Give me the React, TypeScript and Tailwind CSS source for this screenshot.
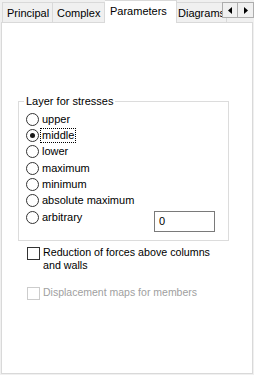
import React from "react";

const font = { fontFamily: '"Liberation Sans", Arial, sans-serif' };

function Radio({ label, checked, focus }: { label: string; checked?: boolean; focus?: boolean }) {
  return (
    <div className="flex items-center h-[16.33px]">
      <span className="w-[13px] h-[13px] rounded-full border border-[#333333] bg-white flex items-center justify-center shrink-0">
        {checked && <span className="w-[5px] h-[5px] rounded-full bg-[#1a1a1a]" />}
      </span>
      <span
        className={
          "ml-[2px] px-px leading-[13px] text-[11px] text-black " +
          (focus ? "outline outline-1 outline-dotted outline-black" : "")
        }
      >
        {label}
      </span>
    </div>
  );
}

export default function App() {
  return (
    <div className="w-[254px] h-[375px] bg-[#f0f0f0] overflow-hidden" style={font}>
      <div className="relative h-[22px] flex items-end pl-[2px]">
        <div className="h-[20px] w-[51px] border border-b-0 border-[#d9d9d9] bg-[#f0f0f0] text-[11px] text-black pl-[4px] pt-[4px] leading-[13px]">
          Principal
        </div>
        <div className="h-[20px] w-[52px] border border-b-0 border-l-0 border-[#d9d9d9] bg-[#f0f0f0] text-[11px] text-black pl-[4px] pt-[4px] leading-[13px]">
          Complex
        </div>
        <div className="relative z-10 -mb-px h-[23px] w-[72px] border border-b-0 border-l-0 border-[#d9d9d9] bg-white text-[11px] text-black pl-[5px] pt-[4px] leading-[13px]">
          Parameters
        </div>
        <div className="h-[20px] w-[50px] border border-b-0 border-l-0 border-[#d9d9d9] bg-[#f0f0f0] text-[11px] text-black pl-[1px] pt-[4px] leading-[13px] whitespace-nowrap overflow-hidden">
          Diagrams
        </div>
        <div className="absolute right-0 top-[2px] flex">
          <div className="w-[16px] h-[16px] border border-[#adadad] bg-[#f0f0f0] flex items-center justify-center">
            <svg width="4" height="7" viewBox="0 0 4 7"><path d="M4 0 L0 3.5 L4 7 Z" fill="#000" /></svg>
          </div>
          <div className="w-[16px] h-[16px] border border-l-0 border-[#adadad] bg-[#f0f0f0] flex items-center justify-center">
            <svg width="4" height="7" viewBox="0 0 4 7"><path d="M0 0 L4 3.5 L0 7 Z" fill="#000" /></svg>
          </div>
        </div>
      </div>
      <div className="ml-px w-[252px] h-[352px] border border-[#d9d9d9] bg-white">
        <div className="relative ml-[16px] mt-[78px] w-[211px] border border-[#dcdcdc] pl-[7px] pt-[9px] pb-[8px]">
          <div className="absolute left-[5px] top-[-8px] bg-white px-[2px] text-[11px] leading-[14px] text-black">
            Layer for stresses
          </div>
          <Radio label="upper" />
          <Radio label="middle" checked focus />
          <Radio label="lower" />
          <Radio label="maximum" />
          <Radio label="minimum" />
          <Radio label="absolute maximum" />
          <div className="flex items-start justify-between pr-[13px]">
            <Radio label="arbitrary" />
            <div className="mt-[2px] w-[61px] h-[21px] border border-[#7a7a7a] bg-white text-[11px] text-black pl-[4px] leading-[19px]">
              0
            </div>
          </div>
        </div>
        <div className="ml-[25px] mt-[5px] flex items-start">
          <span className="mt-[1px] w-[13px] h-[13px] border border-[#333333] bg-white shrink-0" />
          <span className="ml-[3px] w-[175px] text-[10.7px] leading-[13px] text-black">
            Reduction of forces above columns and walls
          </span>
        </div>
        <div className="ml-[25px] mt-[14px] flex items-start">
          <span className="mt-px w-[13px] h-[13px] border border-[#cccccc] bg-white shrink-0" />
          <span className="ml-[3px] text-[10.5px] leading-[13px] text-[#a0a0a0]">
            Displacement maps for members
          </span>
        </div>
      </div>
    </div>
  );
}
